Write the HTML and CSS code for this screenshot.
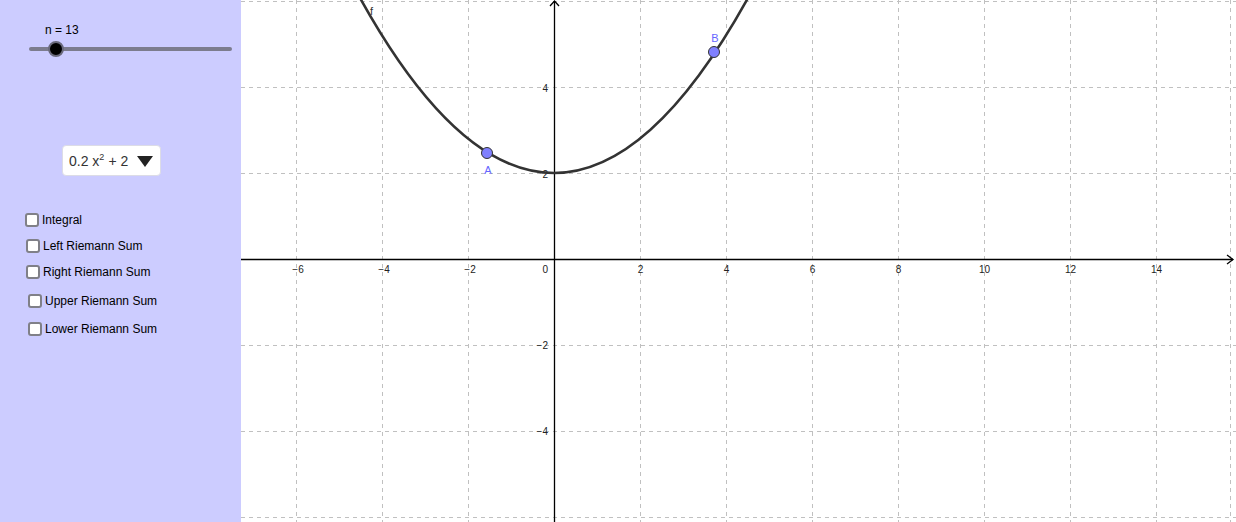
FILE: index.html
```html
<!DOCTYPE html>
<html>
<head>
<meta charset="utf-8">
<link rel="stylesheet" href="styles.css">
</head>
<body>
<div class="app">
  <aside class="panel">
    <div class="slider">
      <div class="slider-label">n = 13</div>
      <div class="track"><div class="thumb"></div></div>
    </div>
    <div class="dropdown">
      <span class="expr">0.2 x<sup>2</sup><span class="op">+</span>2</span>
      <span class="caret"></span>
    </div>
    <ul class="checks">
      <li class="check c1"><span class="box"></span>Integral</li>
      <li class="check c2"><span class="box"></span>Left Riemann Sum</li>
      <li class="check c3"><span class="box"></span>Right Riemann Sum</li>
      <li class="check c4"><span class="box"></span>Upper Riemann Sum</li>
      <li class="check c5"><span class="box"></span>Lower Riemann Sum</li>
    </ul>
  </aside>
  <div class="graph">
    <svg width="995" height="522" viewBox="0 0 995 522" xmlns="http://www.w3.org/2000/svg">
      <g class="grid">
        <line x1="55.5" y1="0" x2="55.5" y2="522"/>
        <line x1="141.5" y1="0" x2="141.5" y2="522"/>
        <line x1="227.5" y1="0" x2="227.5" y2="522"/>
        <line x1="399.5" y1="0" x2="399.5" y2="522"/>
        <line x1="485.5" y1="0" x2="485.5" y2="522"/>
        <line x1="571.5" y1="0" x2="571.5" y2="522"/>
        <line x1="657.5" y1="0" x2="657.5" y2="522"/>
        <line x1="743.5" y1="0" x2="743.5" y2="522"/>
        <line x1="829.5" y1="0" x2="829.5" y2="522"/>
        <line x1="915.5" y1="0" x2="915.5" y2="522"/>
        <line x1="989.5" y1="0" x2="989.5" y2="522"/>
        <line x1="0" y1="1.5" x2="995" y2="1.5"/>
        <line x1="0" y1="87.5" x2="995" y2="87.5"/>
        <line x1="0" y1="173.5" x2="995" y2="173.5"/>
        <line x1="0" y1="345.5" x2="995" y2="345.5"/>
        <line x1="0" y1="431.5" x2="995" y2="431.5"/>
        <line x1="0" y1="517.5" x2="995" y2="517.5"/>
      </g>
      <g class="axes">
        <line x1="0" y1="259.5" x2="992" y2="259.5"/>
        <line x1="313.5" y1="1" x2="313.5" y2="522"/>
        <polyline points="986,255 992,259.5 986,264"/>
        <polyline points="309,6 313.5,1 318,6"/>
      </g>
      <g class="ticks-x">
        <text x="57" y="273">−6</text>
        <text x="143" y="273">−4</text>
        <text x="229" y="273">−2</text>
        <text x="399.5" y="273">2</text>
        <text x="485.5" y="273">4</text>
        <text x="571.5" y="273">6</text>
        <text x="657.5" y="273">8</text>
        <text x="743.5" y="273">10</text>
        <text x="829.5" y="273">12</text>
        <text x="915.5" y="273">14</text>
      </g>
      <g class="ticks-y">
        <text x="307" y="273">0</text>
        <text x="307" y="92">4</text>
        <text x="307" y="178">2</text>
        <text x="307" y="349">−2</text>
        <text x="307" y="435">−4</text>
      </g>
      <path class="curve" d="M98,-42 Q313,388 528,-42"/>
      <text class="fname" x="129" y="15">f</text>
      <circle class="pt" cx="246" cy="153" r="5.5"/>
      <circle class="pt" cx="473" cy="52" r="5.5"/>
      <text class="plabel" x="247" y="174">A</text>
      <text class="plabel" x="474" y="42">B</text>
    </svg>
  </div>
</div>
</body>
</html>
```

FILE: styles.css
```css
html, body {
  margin: 0;
  padding: 0;
  background: #ffffff;
}
body {
  font-family: "Liberation Sans", Arial, sans-serif;
}
.app {
  display: flex;
  width: 1236px;
  height: 522px;
  overflow: hidden;
}
.panel {
  flex: none;
  width: 241px;
  height: 522px;
  background: #ccccff;
  padding-top: 23px;
  box-sizing: border-box;
}
.slider-label {
  margin-left: 45px;
  font-size: 12px;
  line-height: 14px;
  color: #000;
}
.track {
  position: relative;
  margin-left: 29px;
  margin-top: 10px;
  width: 203px;
  height: 4px;
  border-radius: 2px;
  background: #7c7c8e;
}
.thumb {
  position: absolute;
  left: 19px;
  top: -6px;
  width: 16px;
  height: 16px;
  box-sizing: border-box;
  border-radius: 50%;
  background: #000;
  border: 2px solid #6a6a7c;
}
.dropdown {
  display: flex;
  align-items: center;
  margin-top: 94px;
  margin-left: 62px;
  width: 99px;
  height: 31px;
  box-sizing: border-box;
  background: #fff;
  border: 1px solid #dcdce6;
  border-radius: 4px;
  padding-left: 6px;
  padding-right: 7px;
}
.expr {
  font-size: 14px;
  color: #333;
  white-space: nowrap;
}
.expr sup {
  font-size: 9px;
  vertical-align: 6px;
  line-height: 0;
}
.op {
  margin: 0 4px;
}
.caret {
  margin-left: auto;
  width: 0;
  height: 0;
  border-left: 8px solid transparent;
  border-right: 8px solid transparent;
  border-top: 11px solid #222;
  margin-top: 2px;
}
.checks {
  list-style: none;
  margin: 0;
  padding: 0;
  margin-top: 36px;
}
.check {
  display: flex;
  align-items: center;
  height: 16px;
  font-size: 12px;
  color: #000;
}
.box {
  width: 14px;
  height: 14px;
  box-sizing: border-box;
  border: 2px solid #808088;
  border-radius: 3px;
  background: #fff;
  margin-right: 3px;
}
.c1 { margin-left: 25px; }
.c2 { margin-left: 26px; margin-top: 10px; }
.c3 { margin-left: 26px; margin-top: 10px; }
.c4 { margin-left: 28px; margin-top: 13px; }
.c5 { margin-left: 28px; margin-top: 12px; }
.graph {
  flex: none;
  width: 995px;
  height: 522px;
}
.graph svg {
  display: block;
}
.grid line {
  stroke: #c0c0c0;
  stroke-width: 1;
  stroke-dasharray: 4 4;
}
.axes line, .axes polyline {
  stroke: #000;
  stroke-width: 1.3;
  fill: none;
}
.ticks-x text {
  font-family: "Liberation Sans", Arial, sans-serif;
  font-size: 10px;
  fill: #222;
  text-anchor: middle;
}
.ticks-y text {
  font-family: "Liberation Sans", Arial, sans-serif;
  font-size: 10px;
  fill: #222;
  text-anchor: end;
}
.curve {
  fill: none;
  stroke: #333333;
  stroke-width: 2.6;
}
.fname {
  font-family: "Liberation Sans", Arial, sans-serif;
  font-size: 11px;
  fill: #333;
}
.pt {
  fill: #8080ff;
  stroke: #333;
  stroke-width: 1;
}
.plabel {
  font-family: "Liberation Sans", Arial, sans-serif;
  font-size: 11px;
  fill: #6666ff;
  text-anchor: middle;
}
```
